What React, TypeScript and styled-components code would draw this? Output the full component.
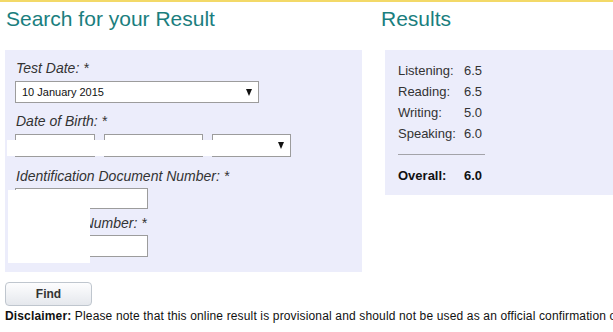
import React from "react";
import styled, { createGlobalStyle } from "styled-components";

const GlobalStyle = createGlobalStyle`
  html, body {
    margin: 0;
    padding: 0;
    background: #ffffff;
    overflow: hidden;
  }
  body {
    font-family: "Liberation Sans", Arial, sans-serif;
    color: #333333;
  }
`;

const Page = styled.div`
  width: 613px;
  height: 332px;
  overflow: hidden;
  box-sizing: border-box;
  border-top: 2px solid #f3d968;
  padding: 5px 0 0 5px;
`;

const Columns = styled.div`
  display: flex;
  gap: 19px;
  align-items: flex-start;
`;

const LeftColumn = styled.section`
  width: 357px;
  flex-shrink: 0;
`;

const RightColumn = styled.section`
  width: 260px;
  flex-shrink: 0;
`;

const Heading = styled.h2<{ $indent?: number }>`
  margin: 0 0 19px;
  padding-left: ${(p) => p.$indent ?? 0}px;
  font-size: 21px;
  line-height: 24px;
  font-weight: normal;
  color: #1a7e7e;
  white-space: nowrap;
`;

const FormPanel = styled.div`
  position: relative;
  box-sizing: border-box;
  width: 357px;
  background: #ecedfb;
  padding: 10px 10px 15px 10px;
  display: flex;
  flex-direction: column;
`;

const Field = styled.div<{ $gapBefore?: number; $labelGap?: number }>`
  display: flex;
  flex-direction: column;
  gap: ${(p) => p.$labelGap ?? 5}px;
  margin-top: ${(p) => p.$gapBefore ?? 0}px;
`;

const Label = styled.label`
  font-size: 14px;
  line-height: 16px;
  font-style: italic;
  color: #333333;
  padding-left: 1px;
  white-space: nowrap;
`;

const SelectBox = styled.div<{ $width: number; $height?: number }>`
  box-sizing: border-box;
  width: ${(p) => p.$width}px;
  height: ${(p) => p.$height ?? 22}px;
  background: #ffffff;
  border: 1px solid #9c9c9c;
  display: flex;
  align-items: center;
  justify-content: space-between;
  padding: 0 6px 0 6px;
  font-size: 11px;
  color: #111111;
`;

const Arrow = styled.span`
  width: 0;
  height: 0;
  border-left: 3.5px solid transparent;
  border-right: 3.5px solid transparent;
  border-top: 7px solid #111111;
`;

const DobRow = styled.div`
  display: flex;
  gap: 9px;
`;

const TextBox = styled.div<{ $height?: number }>`
  box-sizing: border-box;
  width: 133px;
  height: ${(p) => p.$height ?? 21}px;
  background: #ffffff;
  border: 1px solid #9c9c9c;
`;

const Redact = styled.div<{ $top: number; $left: number; $w: number; $h: number }>`
  position: absolute;
  top: ${(p) => p.$top}px;
  left: ${(p) => p.$left}px;
  width: ${(p) => p.$w}px;
  height: ${(p) => p.$h}px;
  background: #ffffff;
`;

const ResultsPanel = styled.div`
  margin-left: 4px;
  box-sizing: border-box;
  height: 145px;
  background: #ecedfb;
  padding: 10px 13px 0 13px;
`;

const ScoreGrid = styled.div`
  display: grid;
  grid-template-columns: 66px auto;
  width: 87px;
  font-size: 13px;
  line-height: 21px;
  color: #333333;
`;

const Divider = styled.hr`
  width: 87px;
  margin: 10px 0 0 0;
  border: none;
  border-top: 1px solid #a3a3a9;
  height: 0;
`;

const OverallRow = styled.div`
  display: grid;
  grid-template-columns: 66px auto;
  margin-top: 10px;
  font-size: 13px;
  line-height: 21px;
  font-weight: bold;
  color: #111111;
`;

const FindButton = styled.button`
  display: block;
  margin-top: 10px;
  box-sizing: border-box;
  width: 87px;
  height: 24px;
  border: 1px solid #bfc6ce;
  border-radius: 4px;
  background: linear-gradient(#fdfdfe, #e5e8ed);
  font-family: "Liberation Sans", Arial, sans-serif;
  font-size: 12px;
  font-weight: bold;
  color: #333333;
  padding: 0;
`;

const Disclaimer = styled.p`
  margin: 2px 0 0;
  font-size: 12px;
  line-height: 16px;
  letter-spacing: 0.15px;
  color: #111111;
  white-space: nowrap;
`;

const scores = [
  ["Listening:", "6.5"],
  ["Reading:", "6.5"],
  ["Writing:", "5.0"],
  ["Speaking:", "6.0"],
];

export default function App() {
  return (
    <>
      <GlobalStyle />
      <Page>
        <Columns>
          <LeftColumn>
            <Heading $indent={1}>Search for your Result</Heading>
            <FormPanel>
              <Field>
                <Label>Test Date: *</Label>
                <SelectBox $width={244}>
                  <span>10 January 2015</span>
                  <Arrow />
                </SelectBox>
              </Field>
              <Field $gapBefore={10}>
                <Label>Date of Birth: *</Label>
                <DobRow>
                  <SelectBox $width={80} $height={23}>
                    <span />
                    <Arrow />
                  </SelectBox>
                  <SelectBox $width={99} $height={23}>
                    <span />
                    <Arrow />
                  </SelectBox>
                  <SelectBox $width={79} $height={23}>
                    <span />
                    <Arrow />
                  </SelectBox>
                </DobRow>
              </Field>
              <Field $gapBefore={11} $labelGap={4}>
                <Label>Identification Document Number: *</Label>
                <TextBox />
              </Field>
              <Field $gapBefore={6} $labelGap={4}>
                <Label>Candidate Number: *</Label>
                <TextBox $height={22} />
              </Field>
              <Redact $top={90} $left={2} $w={207} $h={16} />
              <Redact $top={140} $left={3} $w={82} $h={73} />
            </FormPanel>
          </LeftColumn>
          <RightColumn>
            <Heading>Results</Heading>
            <ResultsPanel>
              <ScoreGrid>
                {scores.map(([k, v]) => (
                  <React.Fragment key={k}>
                    <span>{k}</span>
                    <span>{v}</span>
                  </React.Fragment>
                ))}
              </ScoreGrid>
              <Divider />
              <OverallRow>
                <span>Overall:</span>
                <span>6.0</span>
              </OverallRow>
            </ResultsPanel>
          </RightColumn>
        </Columns>
        <FindButton type="button">Find</FindButton>
        <Disclaimer>
          <b>Disclaimer:</b> Please note that this online result is provisional and should not be used as an official
          confirmation of your performance.
        </Disclaimer>
      </Page>
    </>
  );
}
